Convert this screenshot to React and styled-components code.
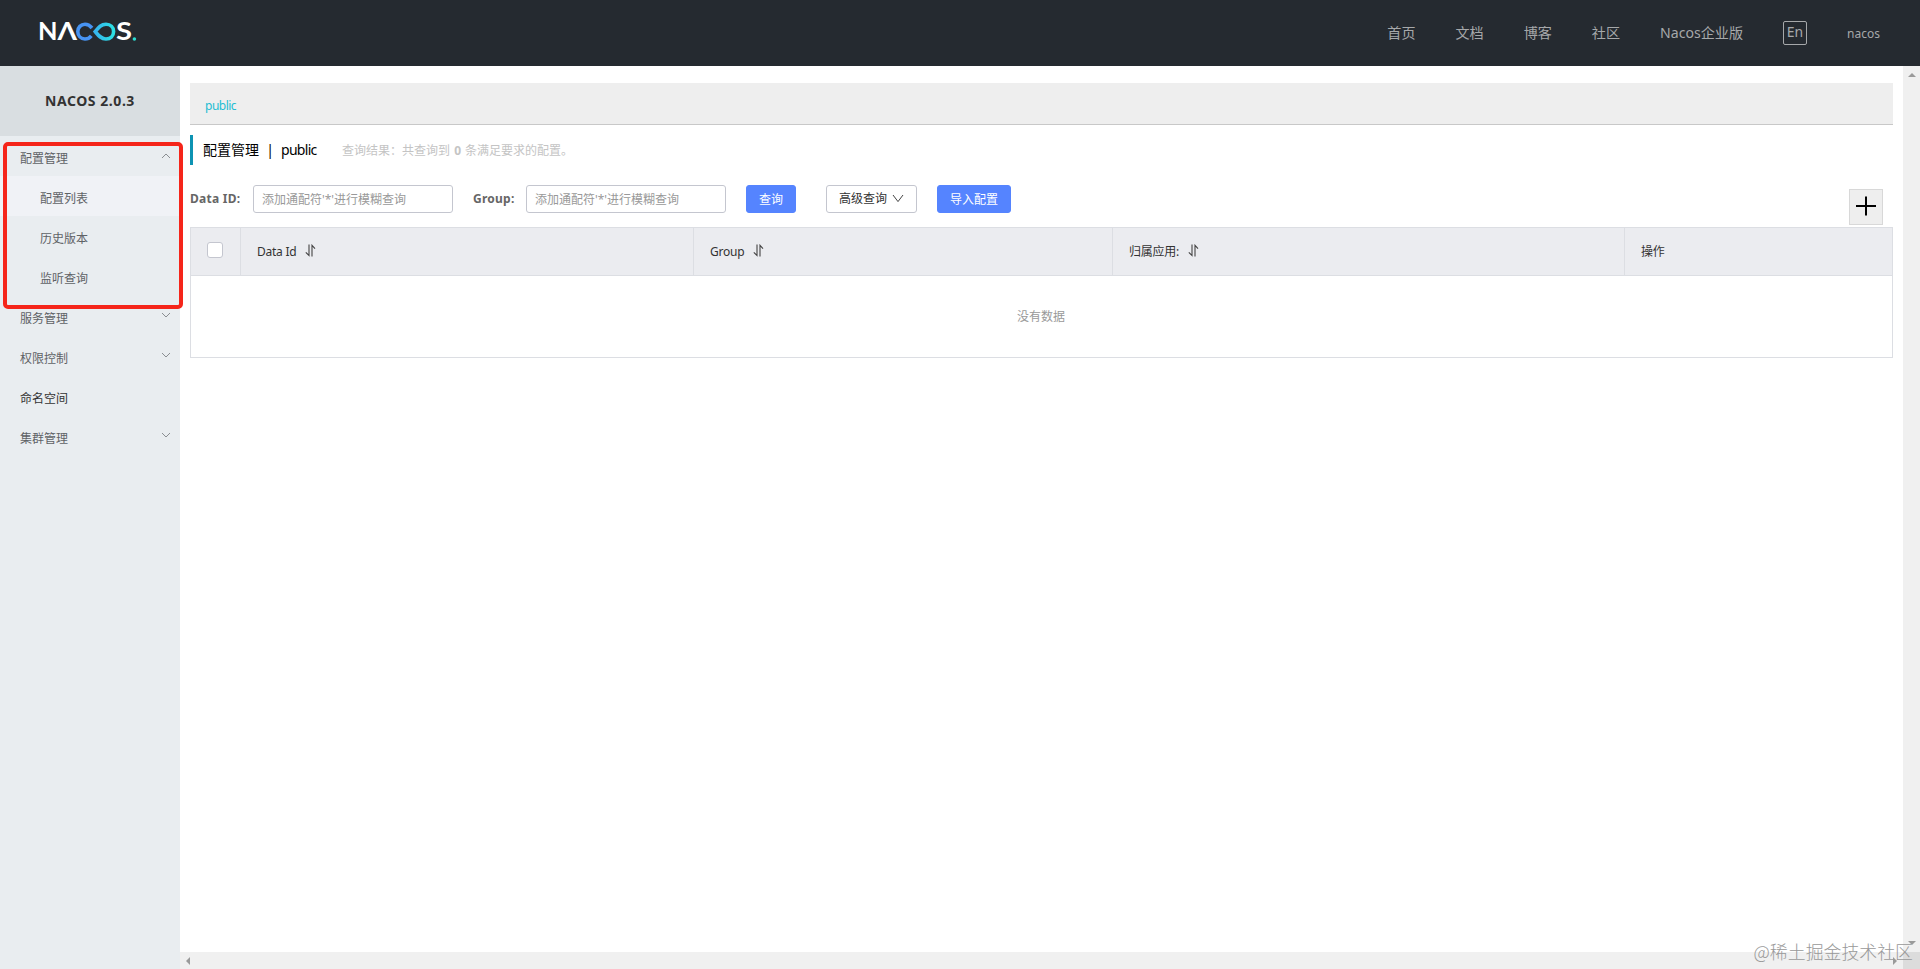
import React, { useState } from "react";
import styled, { createGlobalStyle } from "styled-components";

const navItems = ["首页", "文档", "博客", "社区", "Nacos企业版"];

const menus = [
  {
    name: "配置管理",
    open: true,
    children: ["配置列表", "历史版本", "监听查询"],
  },
  { name: "服务管理", children: [] },
  { name: "权限控制", children: [] },
  { name: "命名空间" },
  { name: "集群管理", children: [] },
];

const Logo = () => (
  <LogoSvg viewBox="-4 -10 108 40">
    <defs>
      <linearGradient id="loop" x1="0" x2="1" y1="0" y2="0">
        <stop offset="0" stopColor="#36b4ee" />
        <stop offset="1" stopColor="#2be0e4" />
      </linearGradient>
    </defs>
    <LogoText x="-2" y="18.4" textLength="19.5" lengthAdjust="spacingAndGlyphs">
      N
    </LogoText>
    <LogoText x="17.5" y="18.4" textLength="19.5" lengthAdjust="spacingAndGlyphs">
      Λ
    </LogoText>
    <path
      d="M51.3 13.8 C49.5 16 47.6 17 45 17 C40.8 17 37.8 13.8 37.8 9.6 C37.8 5.4 40.8 2.3 45 2.3 C48 2.3 50 3.6 52 6"
      fill="none"
      stroke="#4793f2"
      strokeWidth="3.6"
    />
    <path
      d="M55.2 9.6 C58.5 5.6 61 2.3 66 2.3 C70.5 2.3 73.6 5.4 73.6 9.6 C73.6 13.8 70.5 17 66 17 C61 17 58.5 13.6 55.2 9.6 Z"
      fill="none"
      stroke="url(#loop)"
      strokeWidth="3.6"
    />
    <LogoText x="76" y="18.4" textLength="16" lengthAdjust="spacingAndGlyphs">
      S
    </LogoText>
    <circle cx="94.4" cy="17" r="1.8" fill="#2bdccf" />
  </LogoSvg>
);

const Chevron = ({ up }) => (
  <ChevronSvg viewBox="0 0 10 6" $up={up}>
    <path d="M1 1 L5 5 L9 1" />
  </ChevronSvg>
);

const SortIcon = () => (
  <SortSvg viewBox="0 0 11 13">
    <path d="M4 0.5 V11.5 L0.8 8.4 M7 12.5 V1.3 L10 4.6" />
  </SortSvg>
);

const App = () => {
  const [dataId, setDataId] = useState("");
  const [group, setGroup] = useState("");

  return (
    <Page>
      <GlobalStyle />
      <Header>
        <Logo />
        <Nav>
          {navItems.map((item) => (
            <NavLink key={item}>{item}</NavLink>
          ))}
          <Lang>En</Lang>
          <User>nacos</User>
        </Nav>
      </Header>
      <Body>
        <Sidebar>
          <Version>NACOS 2.0.3</Version>
          {menus.map((menu) => (
            <div key={menu.name}>
              <MenuItem $leaf={!menu.children}>
                {menu.name}
                {menu.children && <Chevron up={menu.open} />}
              </MenuItem>
              {menu.open &&
                menu.children.map((child, i) => (
                  <SubItem key={child} $active={i === 0}>
                    {child}
                  </SubItem>
                ))}
            </div>
          ))}
          <Highlight />
        </Sidebar>
        <Main>
          <Scroller>
            <Content>
              <Namespace>public</Namespace>
              <TitleRow>
                <Title>配置管理</Title>
                <Divider>|</Divider>
                <TitleName>public</TitleName>
                <Result>
                  查询结果：共查询到 <b>0</b> 条满足要求的配置。
                </Result>
              </TitleRow>
              <Form>
                <Label $width="63px">Data ID:</Label>
                <Input
                  value={dataId}
                  onChange={(e) => setDataId(e.target.value)}
                  placeholder="添加通配符'*'进行模糊查询"
                />
                <Label $width="53px" $left="20px">
                  Group:
                </Label>
                <Input
                  value={group}
                  onChange={(e) => setGroup(e.target.value)}
                  placeholder="添加通配符'*'进行模糊查询"
                />
                <Button $primary $width="50px" $left="20px">
                  查询
                </Button>
                <Button $width="91px" $left="30px">
                  <ButtonText>高级查询</ButtonText>
                  <ButtonArrow viewBox="0 0 12 9">
                    <path d="M1 1 L6 7.6 L11 1" />
                  </ButtonArrow>
                </Button>
                <Button $primary $width="74px" $left="20px">
                  导入配置
                </Button>
                <AddButton>
                  <svg width="20" height="20" viewBox="0 0 20 20">
                    <path d="M10 0.5 V19.5 M0 10 H20" stroke="#000" strokeWidth="2" />
                  </svg>
                </AddButton>
              </Form>
              <Table>
                <TableHead>
                  <CheckCell>
                    <Checkbox />
                  </CheckCell>
                  <HeadCell>
                    Data Id
                    <SortIcon />
                  </HeadCell>
                  <HeadCell>
                    Group
                    <SortIcon />
                  </HeadCell>
                  <HeadCell>
                    归属应用:
                    <SortIcon />
                  </HeadCell>
                  <HeadCell>操作</HeadCell>
                </TableHead>
                <Empty>没有数据</Empty>
              </Table>
            </Content>
            <VerticalBar>
              <Arrow viewBox="0 0 8 4">
                <path d="M0 4 L4 0 L8 4 Z" />
              </Arrow>
              <Arrow viewBox="0 0 8 4">
                <path d="M0 0 L4 4 L8 0 Z" />
              </Arrow>
            </VerticalBar>
          </Scroller>
          <BottomRow>
            <HorizontalBar>
              <Arrow $side viewBox="0 0 4 8">
                <path d="M4 0 L0 4 L4 8 Z" />
              </Arrow>
              <Arrow $side viewBox="0 0 4 8">
                <path d="M0 0 L4 4 L0 8 Z" />
              </Arrow>
            </HorizontalBar>
            <Corner />
          </BottomRow>
        </Main>
      </Body>
      <Watermark>@稀土掘金技术社区</Watermark>
    </Page>
  );
};

const GlobalStyle = createGlobalStyle`
  * {
    box-sizing: border-box;
  }

  body {
    margin: 0;
    overflow: hidden;
    font-family: "Noto Sans", "Noto Sans CJK SC", sans-serif;
    font-size: 12px;
  }

  input, button {
    font-family: inherit;
  }
`;

const Page = styled.div`
  position: relative;
  display: flex;
  flex-direction: column;
  width: 100%;
  height: 100vh;
  background-color: #fff;
`;

const Header = styled.header`
  display: flex;
  align-items: center;
  justify-content: space-between;
  flex: none;
  height: 66px;
  padding: 0 40px 0 36px;
  background-color: #252a30;
`;

const LogoSvg = styled.svg`
  width: 108px;
  height: 40px;
  margin-top: -2px;
`;

const LogoText = styled.text`
  fill: #fff;
  font-family: Lato, sans-serif;
  font-size: 24.5px;
  font-weight: 700;
`;

const Nav = styled.nav`
  display: flex;
  align-items: center;
  gap: 40px;
`;

const NavLink = styled.a`
  color: #a6a8aa;
  font-size: 14.1px;
  line-height: 20px;
  white-space: nowrap;
  cursor: pointer;
`;

const Lang = styled.span`
  width: 24px;
  height: 24px;
  border: 1px solid #a6a8aa;
  border-radius: 2px;
  color: #a6a8aa;
  font-size: 14px;
  line-height: 20px;
  text-align: center;
  cursor: pointer;
`;

const User = styled.span`
  width: 33px;
  padding-top: 2px;
  color: #a6a8aa;
  font-size: 12px;
  line-height: 20px;
`;

const Body = styled.div`
  display: flex;
  flex: 1;
  min-height: 0;
`;

const Sidebar = styled.aside`
  position: relative;
  flex: none;
  width: 180px;
  background-color: #e9edf0;
`;

const Version = styled.div`
  height: 70px;
  background-color: #d9dee1;
  color: #333;
  font-size: 14px;
  font-weight: 700;
  letter-spacing: 0.55px;
  line-height: 70px;
  text-align: center;
`;

const MenuItem = styled.div`
  display: flex;
  align-items: center;
  justify-content: space-between;
  height: 40px;
  padding: 4px 9px 0 20px;
  color: ${(props) => (props.$leaf ? "#333" : "#5f6266")};
  cursor: pointer;
`;

const SubItem = styled.div`
  height: 40px;
  padding-left: 40px;
  padding-top: 4px;
  background-color: ${(props) => (props.$active ? "#f0f2f6" : "transparent")};
  color: #5f6266;
  line-height: 37px;
  cursor: pointer;
`;

const ChevronSvg = styled.svg`
  width: 10px;
  height: 6px;
  margin-bottom: ${(props) => (props.$up ? "5px" : "7px")};
  transform: ${(props) => (props.$up ? "rotate(180deg)" : "none")};
  fill: none;
  stroke: #8a8e92;
`;

/* red frame laid over the first menu group */
const Highlight = styled.div`
  position: absolute;
  top: 76px;
  left: 3px;
  width: 180px;
  height: 167px;
  border: 4px solid #f5251a;
  border-radius: 5px;
  z-index: 1;
`;

const Main = styled.main`
  display: flex;
  flex-direction: column;
  flex: 1;
  min-width: 0;
`;

const Scroller = styled.div`
  display: flex;
  flex: 1;
`;

const Content = styled.div`
  flex: 1;
  padding: 17px 10px 0;
`;

const Namespace = styled.div`
  height: 42px;
  padding-left: 15px;
  border-bottom: 1px solid #c8c8c8;
  background-color: #eee;
  color: #23bdd3;
  letter-spacing: -0.5px;
  line-height: 45px;
`;

const TitleRow = styled.div`
  display: flex;
  align-items: center;
  height: 30px;
  margin-top: 10px;
  padding-left: 10px;
  border-left: 3px solid #0d93b3;
  color: #000;
  font-size: 14px;
  line-height: 30px;
`;

const Title = styled.span`
  width: 56px;
`;

const Divider = styled.span`
  width: 22px;
  text-align: center;
`;

const TitleName = styled.span`
  width: 61px;
  letter-spacing: -0.7px;
`;

const Result = styled.span`
  padding-top: 1px;
  color: #c4c4c4;
  font-size: 12px;

  b {
    margin: 0 1px;
  }
`;

const Form = styled.div`
  display: flex;
  align-items: flex-start;
  height: 42px;
  margin-top: 20px;
`;

const Label = styled.label`
  width: ${(props) => props.$width};
  margin-left: ${(props) => props.$left || 0};
  color: #666;
  font-weight: 700;
  letter-spacing: 0.25px;
  line-height: 28px;
`;

const Input = styled.input`
  width: 200px;
  height: 28px;
  padding: 0 8px;
  border: 1px solid #c4c6cf;
  border-radius: 3px;
  outline: none;
  color: #333;
  font-size: 12px;

  &::placeholder {
    color: #999;
  }
`;

const Button = styled.button`
  display: flex;
  align-items: center;
  justify-content: center;
  gap: 5px;
  width: ${(props) => props.$width};
  height: 28px;
  margin-left: ${(props) => props.$left};
  padding: 0;
  border: 1px solid ${(props) => (props.$primary ? "#5584ff" : "#c4c6cf")};
  border-radius: 3px;
  background-color: ${(props) => (props.$primary ? "#5584ff" : "#fff")};
  color: ${(props) => (props.$primary ? "#fff" : "#333")};
  font-size: 12px;
  white-space: nowrap;
  cursor: pointer;
`;

const ButtonText = styled.span`
  margin-bottom: 3px;
`;

const ButtonArrow = styled.svg`
  width: 12px;
  height: 9px;
  margin-bottom: 1px;
  fill: none;
  stroke: #444;
`;

const AddButton = styled.button`
  display: flex;
  align-items: center;
  justify-content: center;
  width: 34px;
  height: 36px;
  margin: 4px 10px 0 auto;
  padding: 0 0 2px;
  border: 1px solid #d8d8d8;
  background-color: #eee;
  cursor: pointer;
`;

const Table = styled.div`
  border: 1px solid #dcdee3;
`;

const TableHead = styled.div`
  display: grid;
  grid-template-columns: 49px 453px 419px 512px 1fr;
  height: 48px;
  border-bottom: 1px solid #dcdee3;
  background-color: #ebecf0;
`;

const HeadCell = styled.div`
  display: flex;
  align-items: center;
  gap: 9px;
  padding: 0 0 1px 16px;
  border-left: 1px solid #dcdee3;
  color: #333;
  letter-spacing: -0.25px;
`;

const CheckCell = styled.div`
  display: flex;
  align-items: center;
  padding: 0 0 3px 16px;
`;

const Checkbox = styled.span`
  width: 16px;
  height: 16px;
  border: 1px solid #c4c6cf;
  border-radius: 3px;
  background-color: #fff;
`;

const SortSvg = styled.svg`
  width: 11px;
  height: 13px;
  margin-bottom: 1px;
  fill: none;
  stroke: #444;
  stroke-width: 1.1;
`;

const Empty = styled.div`
  height: 81px;
  padding-right: 1px;
  color: #999;
  line-height: 82px;
  text-align: center;
`;

const VerticalBar = styled.div`
  display: flex;
  flex-direction: column;
  align-items: center;
  justify-content: space-between;
  width: 17px;
  padding: 7px 0;
  background-color: #f0f0f0;
`;

const BottomRow = styled.div`
  display: flex;
  height: 17px;
`;

const HorizontalBar = styled.div`
  display: flex;
  align-items: center;
  justify-content: space-between;
  flex: 1;
  padding: 0 6px;
  background-color: #f0f0f0;
`;

const Corner = styled.div`
  width: 17px;
  background-color: #dcdcdc;
`;

const Arrow = styled.svg`
  width: ${(props) => (props.$side ? "4px" : "8px")};
  height: ${(props) => (props.$side ? "8px" : "4px")};
  fill: #9a9a9a;
`;

const Watermark = styled.div`
  position: absolute;
  right: 7px;
  bottom: 5px;
  color: #999;
  font-family: "Noto Sans CJK SC", sans-serif;
  font-size: 17.9px;
  font-weight: 300;
  line-height: 26px;
  white-space: nowrap;
`;

export default App;
